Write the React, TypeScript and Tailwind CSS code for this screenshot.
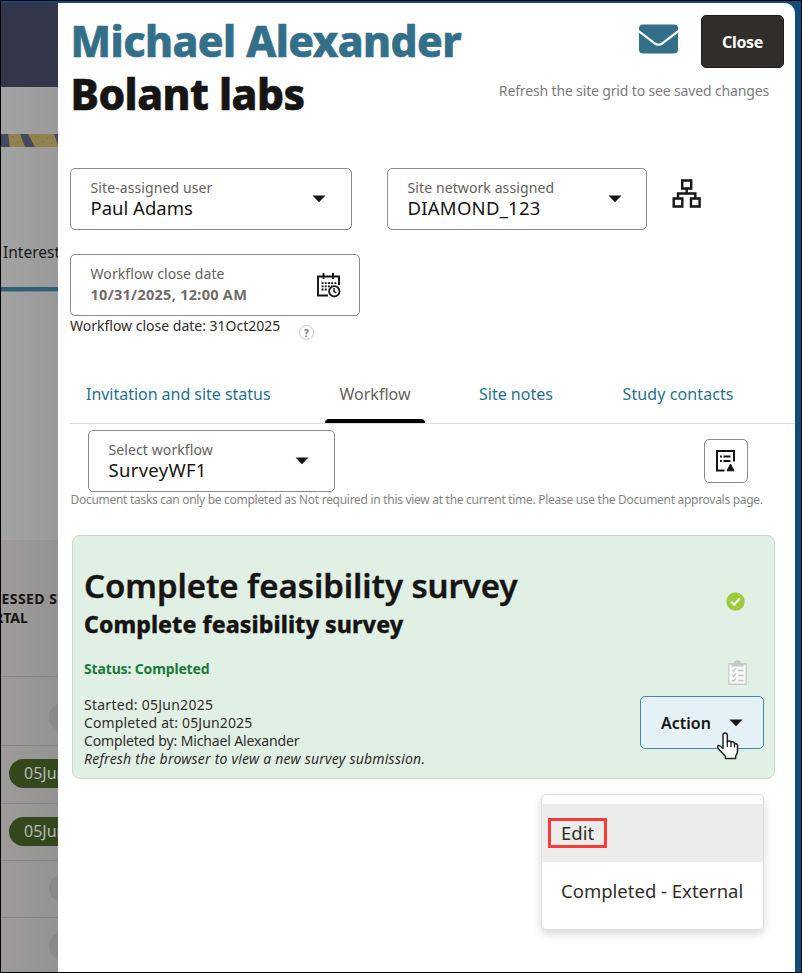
import React from "react";

function Caret({ className = "" }: { className?: string }) {
  return (
    <svg className={className} width="14" height="8" viewBox="0 0 14 8">
      <path d="M0.5 0.5h13L7 7.2z" fill="#161513" />
    </svg>
  );
}

function Field({
  label,
  value,
  className,
  valueClass,
  children,
}: {
  label: string;
  value: string;
  className: string;
  valueClass: string;
  children: React.ReactNode;
}) {
  return (
    <div className={`flex h-[62px] shrink-0 items-center justify-between rounded-[5px] border border-[#8b8b8b] pl-[19.5px] ${className}`}>
      <div className="flex flex-col pb-[2px]">
        <span className="h-5 text-[14px] leading-5 tracking-[0.1px] text-[#65605c]">{label}</span>
        <span className={`h-5 leading-5 ${valueClass}`}>{value}</span>
      </div>
      {children}
    </div>
  );
}

function Backdrop() {
  return (
    <div className="flex w-[57px] shrink-0 flex-col overflow-hidden whitespace-nowrap bg-gradient-to-r from-[#a3a3a3] to-[#999999]">
      <div className="h-[86px] shrink-0 border-t-2 border-[#0f4c7b] bg-[#33354a]" />
      <div className="h-[47px] shrink-0" />
      <svg width="57" height="13" viewBox="0 0 57 13" className="shrink-0">
        <rect width="57" height="13" fill="#45495f" />
        <path d="M7 0h12l5 13H9zM27 0h26l4 11v2H34z" fill="#94824d" />
        <path d="M11 3h2M16 8h2M14 10h1M33 3h3M40 8h3M45 4h2M50 9h2M37 10h1M49 2h1" stroke="#76705a" />
      </svg>
      <div className="flex h-[140px] shrink-0 items-end pb-[25px] pl-[2px]">
        <span className="text-[15.5px] leading-5 text-[#1b1a19]">Interest</span>
      </div>
      <div className="h-[5px] shrink-0 border-b border-[#6d8794] bg-[#315f78]" />
      <div className="h-[248px] shrink-0" />
      <div className="flex h-[137px] shrink-0 flex-col border-b border-[#858383] bg-gradient-to-r from-[#9e9b9a] to-[#959293] pt-[49px] text-[14px] font-bold leading-[19px] text-[#161513]">
        <span className="-ml-[9px] tracking-[0.45px]">CESSED S</span>
        <span className="-ml-[7px]">RTAL</span>
      </div>
      {[0, 1, 2, 3, 4].map((row) => (
        <div
          key={row}
          className={`flex shrink-0 items-center bg-gradient-to-r from-[#9e9b9a] to-[#959293] ${
            row === 0 ? "h-[69px]" : row === 1 ? "h-[58px] pb-[3px]" : "h-[57px] pb-[2px]"
          } ${row < 4 ? "border-b border-[#858383]" : ""}`}
        >
          {row === 1 || row === 2 ? (
            <div className="ml-2 flex h-[29px] w-24 items-center rounded-full bg-[#33491d] pl-[15px] text-[16px] text-[#b6bbb1]">
              05Jun2025
            </div>
          ) : (
            <div className={`ml-12 size-7 shrink-0 rounded-full bg-[#8c898a] ${row === 0 ? "mt-3" : ""}`} />
          )}
        </div>
      ))}
    </div>
  );
}

function Header() {
  return (
    <header className="flex h-[115px] justify-between pl-[12.5px] pr-[11px] pt-[11px]">
      <div className="flex flex-col text-[42.5px] font-extrabold leading-[53px] tracking-[-0.55px] [-webkit-text-stroke:0.6px]">
        <span className="text-[#346f8a]">Michael Alexander</span>
        <span className="text-[#161513]">Bolant labs</span>
      </div>
      <div className="flex flex-col items-end pt-px">
        <div className="flex gap-[23px]">
          <svg className="mt-[9px]" width="39" height="30" viewBox="0 0 39 30">
            <rect x="0" y="0.5" width="39" height="29" rx="4" fill="#346f8a" />
            <path d="M-1 6.5L16 19.5Q19.500 22 23 19.500L40 6.500" fill="none" stroke="#fff" strokeWidth="2.200" />
          </svg>
          <button className="h-[53px] w-[83px] rounded-[5px] border border-[#201e1c] bg-[#312d2a] text-[16px] font-bold tracking-[-0.3px] text-white">
            Close
          </button>
        </div>
        <span className="mr-[15px] mt-[13px] text-[14px] leading-5 tracking-[-0.15px] text-[#7b7b7b]">
          Refresh the site grid to see saved changes
        </span>
      </div>
    </header>
  );
}

function Tabs() {
  const link = "text-[#24728f]";
  return (
    <nav className="mt-[30px] flex h-[52px] border-b border-[#dcdcdc] pl-4 text-[16px] leading-[45px]">
      <span className={`w-[239px] tracking-[-0.03px] ${link}`}>Invitation and site status</span>
      <div className="flex w-[100px] flex-col items-center justify-between text-[#65605c]">
        <span className="h-[45px]">Workflow</span>
        <i className="block h-[4px] w-full rounded-t-[4px] bg-black" />
      </div>
      <span className={`ml-[54px] w-[143.5px] ${link}`}>Site notes</span>
      <span className={`tracking-[0.1px] ${link}`}>Study contacts</span>
    </nav>
  );
}

function TaskCard() {
  return (
    <section className="ml-[2px] mt-[26px] flex h-[244px] w-[703px] justify-between rounded-[8px] border border-[#c5d9cc] bg-[#e0f0e5] pl-[11px] pr-[10px]">
      <div className="flex flex-col text-[#161513]">
        <h2 className="mt-[28px] text-[33px] font-semibold leading-[44px] tracking-[-0.07px] [-webkit-text-stroke:0.4px]">Complete feasibility survey</h2>
        <h3 className="text-[23px] font-extrabold leading-[32px] tracking-[0.06px] [-webkit-text-stroke:0.3px]">Complete feasibility survey</h3>
        <span className="mt-[19px] text-[14px] font-bold leading-5 tracking-[-0.15px] text-[#207a38]">Status: Completed</span>
        <div className="mt-[17px] flex flex-col text-[14px] leading-[18px] text-[#312d2a]">
          <span className="tracking-[0.26px]">Started: 05Jun2025</span>
          <span className="tracking-[0.14px]">Completed at: 05Jun2025</span>
          <span className="tracking-[-0.14px]">Completed by: Michael Alexander</span>
          <em className="tracking-[0.22px]">Refresh the browser to view a new survey submission.</em>
        </div>
      </div>
      <div className="flex flex-col items-end">
        <svg className="mr-[19.5px] mt-[56px]" width="19" height="19" viewBox="0 0 19 19">
          <circle cx="9.500" cy="9.500" r="9.200" fill="#9dcb3b" />
          <path d="M5.200 9.800l3 2.900L13.700 6.500" fill="none" stroke="#fff" strokeWidth="2.200" />
        </svg>
        <svg className="mr-[17px] mt-[49px]" width="19" height="25" viewBox="0 0 19 25">
          <path d="M0.800 3.800h17.400v20.400H0.800z" fill="#f7faf8" stroke="#c8cccb" strokeWidth="1.400" />
          <path d="M3.500 6.500V3H6Q6.500 0.300 9.500 0.300T13 3h2.500v3.500z" fill="#c5c8c8" />
          <path d="M4 10l1.300 1.300L8 8.500M4 15l1.300 1.300L8 13.500M4 20l1.300 1.300L8 18.500M10 10.500h5.500M10 15.500h5.500M10 20.500h5.500" fill="none" stroke="#c0c4c4" strokeWidth="1.300" />
        </svg>
        <button className="mt-[11px] flex h-[53px] w-[124px] items-center justify-between rounded-[5px] border border-[#4389ab] bg-[#e4f1f7] px-5 text-[16px] font-semibold text-[#161513]">
          Action
          <Caret />
        </button>
      </div>
    </section>
  );
}

function ActionMenu() {
  return (
    <div className="absolute left-[540px] top-[793px] flex h-[136px] w-[223px] flex-col rounded-[5px] border border-[#dfdfdf] bg-white pt-[9px] text-[18.5px] text-[#312d2a] shadow-[0_4px_8px_rgba(0,0,0,0.16)]">
      <div className="flex h-[58px] items-center bg-[#ececeb] pl-[6px]">
        <div className="flex h-[30px] w-[59px] items-center border-[3px] border-[#fb3a3a] pl-[10px]">Edit</div>
      </div>
      <div className="flex h-[58px] items-center pl-[19px]">Completed - External</div>
    </div>
  );
}

function Pointer() {
  return (
    <svg className="absolute left-[715px] top-[731px]" width="24" height="28" viewBox="0 0 24 28">
      <path
        d="M7 3Q7 1 9 1T11.300 3V10Q12 8.700 13.500 9T15 10.500Q16 9.500 17.500 10T18.500 12Q19.500 11.300 20.700 12T21.500 14V19Q21.500 22 19.700 24V26.500H9.500V24.500L3.500 18Q1.300 15.500 1.700 14.300Q2.500 13 4 14L7 16.500z"
        fill="#fff"
        stroke="#222"
        strokeWidth="1.500"
        strokeLinejoin="round"
      />
      <path d="M11.300 9v6M15 10.500V15M18.500 12v3.500" stroke="#222" strokeWidth="1.300" />
    </svg>
  );
}

export default function App() {
  return (
    <div className="relative flex h-[973px] w-[802px] overflow-hidden border border-black bg-[#0f4c7b] font-['Noto_Sans',sans-serif]">
      <Backdrop />
      <main className="mt-[2px] flex w-[737px] shrink-0 flex-col whitespace-nowrap rounded-tr-[10px] bg-white">
        <Header />
        <div className="mt-[50px] flex pl-3">
          <Field label="Site-assigned user" value="Paul Adams" className="w-[282px]" valueClass="text-[18.5px] text-[#161513]">
            <Caret className="mr-[25px]" />
          </Field>
          <Field label="Site network assigned" value="DIAMOND_123" className="ml-[35px] w-[260px]" valueClass="text-[18.5px] tracking-[0.25px] text-[#161513]">
            <Caret className="mr-[24px]" />
          </Field>
          <svg className="ml-[25px] mt-[11px]" width="30" height="30" viewBox="0 0 30 30" fill="none" stroke="#161513" strokeWidth="2.400">
            <path d="M10.200 1.500h9v8h-9zM1.700 19.500h8.600v8H1.700zM19 19.500h8.600v8H19zM14.700 9.500v5M6 19.500v-5h17.300v5" />
          </svg>
        </div>
        <div className="mt-[24px] flex flex-col pl-3">
          <Field label="Workflow close date" value="10/31/2025, 12:00 AM" className="w-[290px]" valueClass="text-[14.5px] font-bold tracking-[0.28px] text-[#706c69]">
            <svg className="mr-[18px]" width="25" height="25" viewBox="0 0 25 25" fill="none" stroke="#161513">
              <path d="M12 22.500H2V3.500h21V12M7.500 0v6M17 0v6" strokeWidth="1.900" />
              <path d="M5.500 10.200h15M5.500 13.300h11M5.500 16.500h6" strokeWidth="1.800" strokeDasharray="2 1.200" />
              <circle cx="18.300" cy="18.300" r="5.200" strokeWidth="1.800" />
              <path d="M18 15v3.500l2.300 1.500" strokeWidth="1.400" />
            </svg>
          </Field>
          <div className="flex h-[26px] pt-px">
            <span className="w-[229px] text-[14px] leading-[17px] text-[#312d2a]">Workflow close date: 31Oct2025</span>
            <span className="mt-2 flex size-[15px] items-center justify-center rounded-full border-[1.500px] border-[#cccccc] text-[10px] font-bold leading-none text-[#777777]">?</span>
          </div>
          <Tabs />
          <div className="mt-[6px] flex justify-between pl-[18px] pr-[47px]">
            <Field label="Select workflow" value="SurveyWF1" className="w-[247px]" valueClass="text-[18.5px] tracking-[0.3px] text-[#161513]">
              <Caret className="mr-[25px]" />
            </Field>
            <button className="mt-[9px] flex size-[44px] items-center justify-center rounded-[5px] border border-[#8b8b8b]">
              <svg width="22" height="24" viewBox="0 0 22 24" fill="none" stroke="#161513" strokeWidth="2" className="mr-[2px]">
                <path d="M10.500 21.500H3V2h17v10.500M6 7.500h1.800M9.500 7.500h7M6 12h1.800M9.500 12h7" />
                <path d="M13 21.800L16.500 15l3.500 6.800z" fill="#161513" strokeWidth="1" />
              </svg>
            </button>
          </div>
          <span className="h-[17px] pl-[0.5px] pt-px text-[12px] leading-[14px] tracking-[-0.29px] text-[#858585]">
            Document tasks can only be completed as Not required in this view at the current time. Please use the Document approvals page.
          </span>
          <TaskCard />
        </div>
      </main>
      <ActionMenu />
      <Pointer />
    </div>
  );
}
